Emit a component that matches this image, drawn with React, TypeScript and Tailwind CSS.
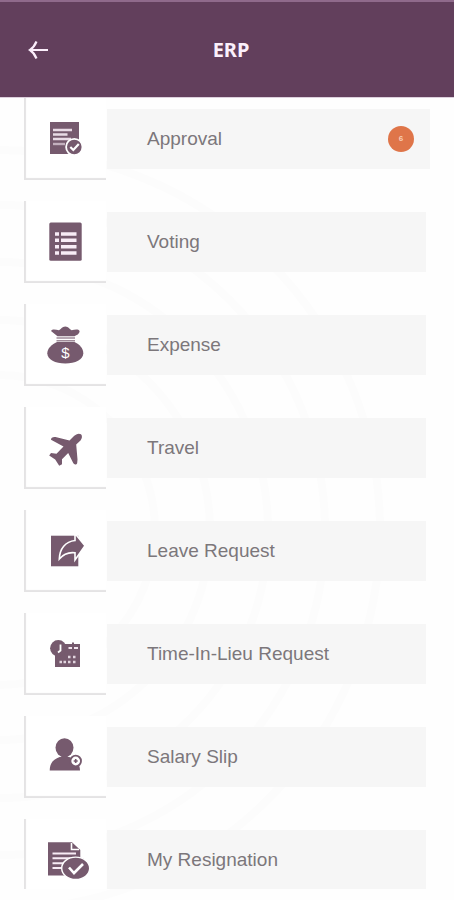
import clsx from 'clsx'
import { ReactNode } from 'react'

interface MenuItem {
  label: string
  icon: ReactNode
  /** Number of pending entries, shown in the round badge. */
  count?: number
}

const ApprovalIcon = () => (
  <>
    <path d="M7 5h29v32H7z" />
    <path d="M10 13h19M10 17.5h14.5M10 22h18" stroke="#e9dbe6" strokeWidth="2.4" />
    <path d="M10 27h12" stroke="#c3b0be" strokeWidth="2.4" />
    <circle cx="31.3" cy="30" r="8.2" stroke="#fff" strokeWidth="1.8" />
    <path d="M27.3 30l3 3 5.5-6" fill="none" stroke="#fff" strokeWidth="2.2" />
  </>
)

const VotingIcon = () => (
  <>
    <rect x="6.3" y="2.5" width="32.4" height="38.2" rx="1.5" />
    <path
      d="M12 14h4M12 20.3h4M12 26.7h4M12 33h4M18 14h15.5M18 20.3h15.5M18 26.7h15.5M18 33h15.5"
      stroke="#f8ecf6"
      strokeWidth="3.4"
    />
  </>
)

const ExpenseIcon = () => (
  <>
    <path d="M14.5 13.2L8 8c1.500-2.500 5-1.200 8-.8C18 6.500 19 3.500 22.300 3.500S26.600 6.500 28.600 7.200c3-.4 6.500-1.700 8 .8-.2 3.500-3 4-5 5.200z" />
    <path d="M13.5 14.200H32v1.600H13.500zM13.500 17H32v1.500H13.500z" opacity=".7" />
    <path d="M14 19h17.500c5 2.500 8.800 6.200 8.800 11.200 0 6.500-8 10.300-18 10.300s-18-3.800-18-10.300c0-5 4.700-8.700 9.700-11.200z" />
    <text
      x="22.5"
      y="35"
      textAnchor="middle"
      fill="#fff"
      className="font-['Liberation_Sans',sans-serif] text-[15px]"
    >
      $
    </text>
  </>
)

const TravelIcon = () => (
  <path d="M38 8.300c-2-1.500-5-.3-7 1.700l-4.500 4.500L12.500 11c-2.500-.4-4.800.8-4.500 2.800L20.500 20.500l-7 7.200-5.500-.7-1.800 2.600 6 4 4 6.200 2.800-1.500v-5l6.200-6.200 5 10c1 1.900 3.500 1.700 4-.2l.3-3.500L33.200 18.500l4.300-4c1.700-2 2-4.700.5-6.200z" />
)

const LeaveIcon = () => (
  <>
    <path d="M8 6.700h27.300v30.600H8z" />
    <path
      d="M32 4.500l10 12.200L32 31v-7.200c-6.500-.8-11.500 1.200-15.700 6.200.3-10.500 6.200-17.500 15.700-18.500z"
      stroke="#fff"
      strokeWidth="1.6"
    />
  </>
)

const TimeIcon = () => (
  <>
    <path d="M12 12h17v-1.500h2V12h6v23H12z" />
    <circle cx="15.3" cy="16.3" r="8.2" />
    <path d="M17.5 12.500v6l-2.500 2" fill="none" stroke="#fff" strokeWidth="1.8" />
    <path d="M25.5 16h3.500M31 16h4" stroke="#f3e6f0" strokeWidth="2.2" />
    <path
      d="M25 25h2.500M30 25h2.500M16.500 30H19M20.500 30H23M25 30h2.500M30 30h2.500"
      stroke="#e2d5df"
      strokeWidth="2.5"
    />
  </>
)

const SalaryIcon = () => (
  <>
    <ellipse cx="21.5" cy="12.7" rx="9" ry="9.5" />
    <path d="M6.700 35.500c0-7.500 4-11.500 10-13.500h9.500c5 2 10.500 4.500 10.800 13.500z" />
    <circle cx="32.7" cy="26" r="5.3" fill="#fff" stroke="#765a6e" strokeWidth="1.8" />
    <path d="M30.7 26h4M32.700 24v4" stroke="#765a6e" strokeWidth="1.6" />
  </>
)

const ResignationIcon = () => (
  <>
    <path d="M5 4.300h24l8.300 7.700v25.500H5z" />
    <path d="M28.5 5v6.500H36" fill="none" stroke="#fff" strokeWidth="1.6" />
    <path
      d="M9.5 15.500H33M9.500 20.300h23.500M9.500 25.200h14M9.500 30h9"
      stroke="#f8ecf6"
      strokeWidth="2"
    />
    <ellipse cx="32.7" cy="30.3" rx="14" ry="11.200" stroke="#fff" strokeWidth="1.4" />
    <path d="M26 29.500l5 5.500 9-9" fill="none" stroke="#fff" strokeWidth="2.6" />
  </>
)

const items: MenuItem[] = [
  { label: 'Approval', icon: <ApprovalIcon />, count: 6 },
  { label: 'Voting', icon: <VotingIcon /> },
  { label: 'Expense', icon: <ExpenseIcon /> },
  { label: 'Travel', icon: <TravelIcon /> },
  { label: 'Leave Request', icon: <LeaveIcon /> },
  { label: 'Time-In-Lieu Request', icon: <TimeIcon /> },
  { label: 'Salary Slip', icon: <SalaryIcon /> },
  { label: 'My Resignation', icon: <ResignationIcon /> },
]

const Header = () => (
  <header className="grid h-[98px] shrink-0 grid-cols-[32px_1fr_24px] items-center border-t-2 border-b border-t-[#8f6a8b] border-b-[#dccfdc] bg-[#623f5c] px-6">
    <button type="button" aria-label="Back" className="flex h-8 w-8 items-center pl-1">
      <svg viewBox="0 0 20 20" className="h-5 w-5" fill="none" stroke="#fbeefb" strokeWidth="2.2">
        <path d="M8.5 1.500C7 5 5 8 2 10c3 2 5 5 6.500 8.500M2.500 10H20" />
      </svg>
    </button>
    <h1 className="text-center font-['Noto_Sans',sans-serif] text-xl font-bold text-[#fbf0fb]">
      ERP
    </h1>
  </header>
)

const MenuRow = ({ label, icon, count }: MenuItem) => (
  <li>
    <button
      type="button"
      className={clsx('flex w-full items-center gap-px pl-6 text-left', count ? 'pr-6' : 'pr-7')}
    >
      <span className="flex h-[82px] w-[82px] shrink-0 items-center justify-center bg-white shadow-[inset_2px_-2px_1px_#e4e3e4]">
        <svg viewBox="0 0 44 44" className="h-11 w-11 overflow-visible" fill="#765a6e" aria-hidden="true">
          {icon}
        </svg>
      </span>
      <span className="flex h-15 flex-1 items-center justify-between bg-[#f6f6f6] pr-4 pl-10 text-[19px] text-[#7c777b]">
        {label}
        {count && (
          <span className="flex h-[26px] w-[26px] items-center justify-center rounded-full bg-[#df7549] text-[8px] font-bold text-[#f8cdb5]">
            {count}
          </span>
        )}
      </span>
    </button>
  </li>
)

export default function App() {
  return (
    <div className="relative isolate flex h-screen flex-col bg-[#fefefe] pb-[11px] font-['Liberation_Sans',Arial,sans-serif]">
      {/* faint rings behind the list */}
      <svg
        className="absolute inset-0 -z-10 h-full w-full"
        fill="none"
        stroke="#fcfcfc"
        strokeWidth="8"
        aria-hidden="true"
      >
        <circle cx="0" cy="530" r="155" />
        <circle cx="0" cy="530" r="210" />
        <circle cx="0" cy="530" r="268" />
        <circle cx="0" cy="530" r="325" />
        <circle cx="0" cy="530" r="380" />
      </svg>
      <Header />
      <ul className="flex min-h-0 flex-1 flex-col gap-[21px] overflow-hidden">
        {items.map((item) => (
          <MenuRow key={item.label} {...item} />
        ))}
      </ul>
    </div>
  )
}
